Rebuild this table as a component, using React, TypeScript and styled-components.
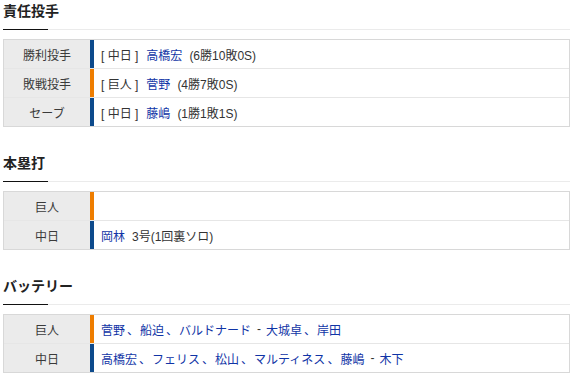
import React from "react";
import styled, { createGlobalStyle } from "styled-components";

const GlobalStyle = createGlobalStyle`
  html, body {
    margin: 0;
    padding: 0;
    background: #fff;
  }
  body {
    font-family: "Liberation Sans", "Noto Sans CJK JP", sans-serif;
    color: #333;
  }
`;

const GIANTS = "#ee7d00";
const DRAGONS = "#0d4a8c";

const Page = styled.div`
  padding: 0 2px 0 3px;
`;

const Section = styled.section`
  & + & {
    margin-top: 25px;
  }
`;

const Heading = styled.h2`
  position: relative;
  margin: 0 0 9px;
  padding: 0 0 7px;
  font-size: 14px;
  line-height: 22px;
  font-weight: bold;
  color: #222;
  border-bottom: 1px solid #ebebeb;
  &::after {
    content: "";
    position: absolute;
    left: 0;
    bottom: -1px;
    width: 45px;
    height: 1px;
    background: #111;
  }
`;

const Table = styled.div`
  border: 1px solid #d8d8d8;
`;

const Row = styled.div`
  display: flex;
  height: 28px;
  & + & {
    border-top: 1px solid #e6e6e6;
  }
`;

const Label = styled.div`
  width: 86px;
  flex: none;
  display: flex;
  align-items: center;
  justify-content: center;
  background: #ebebeb;
  font-size: 12px;
  color: #3a3a3a;
`;

const Value = styled.div<{ $bar: string }>`
  flex: 1;
  display: flex;
  align-items: center;
  border-left: 4px solid ${(p) => p.$bar};
  padding-left: 7px;
  font-size: 12px;
  color: #333;
  white-space: pre;
`;

const Team = styled.span`
  margin-right: 8px;
`;

const Name = styled.a`
  color: #1034a6;
  text-decoration: none;
`;

const Note = styled.span`
  margin-left: 7px;
`;

const Sep = styled.span`
  color: #1034a6;
  padding-left: 2px;
  margin-right: 1px;
`;

const Dash = styled.span`
  margin: 0 5px 0 6px;
`;

type Pitcher = { label: string; team: string; bar: string; name: string; rec: string };

const pitchers: Pitcher[] = [
  { label: "勝利投手", team: "中日", bar: DRAGONS, name: "高橋宏", rec: "(6勝10敗0S)" },
  { label: "敗戦投手", team: "巨人", bar: GIANTS, name: "菅野", rec: "(4勝7敗0S)" },
  { label: "セーブ", team: "中日", bar: DRAGONS, name: "藤嶋", rec: "(1勝1敗1S)" },
];

const battery = [
  { team: "巨人", bar: GIANTS, pitchers: ["菅野", "船迫", "バルドナード"], catchers: ["大城卓", "岸田"] },
  {
    team: "中日",
    bar: DRAGONS,
    pitchers: ["高橋宏", "フェリス", "松山", "マルティネス", "藤嶋"],
    catchers: ["木下"],
  },
];

const NameList: React.FC<{ names: string[] }> = ({ names }) => (
  <>
    {names.map((n, i) => (
      <React.Fragment key={n}>
        <Name href="#">{n}</Name>
        {i < names.length - 1 && <Sep>、</Sep>}
      </React.Fragment>
    ))}
  </>
);

export default function App() {
  return (
    <Page>
      <GlobalStyle />
      <Section>
        <Heading>責任投手</Heading>
        <Table>
          {pitchers.map((p) => (
            <Row key={p.label}>
              <Label>{p.label}</Label>
              <Value $bar={p.bar}>
                <Team>[ {p.team} ]</Team>
                <Name href="#">{p.name}</Name>
                <Note>{p.rec}</Note>
              </Value>
            </Row>
          ))}
        </Table>
      </Section>

      <Section>
        <Heading>本塁打</Heading>
        <Table>
          <Row>
            <Label>巨人</Label>
            <Value $bar={GIANTS} />
          </Row>
          <Row>
            <Label>中日</Label>
            <Value $bar={DRAGONS}>
              <Name href="#">岡林</Name>
              <Note>3号(1回裏ソロ)</Note>
            </Value>
          </Row>
        </Table>
      </Section>

      <Section>
        <Heading>バッテリー</Heading>
        <Table>
          {battery.map((b) => (
            <Row key={b.team}>
              <Label>{b.team}</Label>
              <Value $bar={b.bar}>
                <NameList names={b.pitchers} />
                <Dash>-</Dash>
                <NameList names={b.catchers} />
              </Value>
            </Row>
          ))}
        </Table>
      </Section>
    </Page>
  );
}
